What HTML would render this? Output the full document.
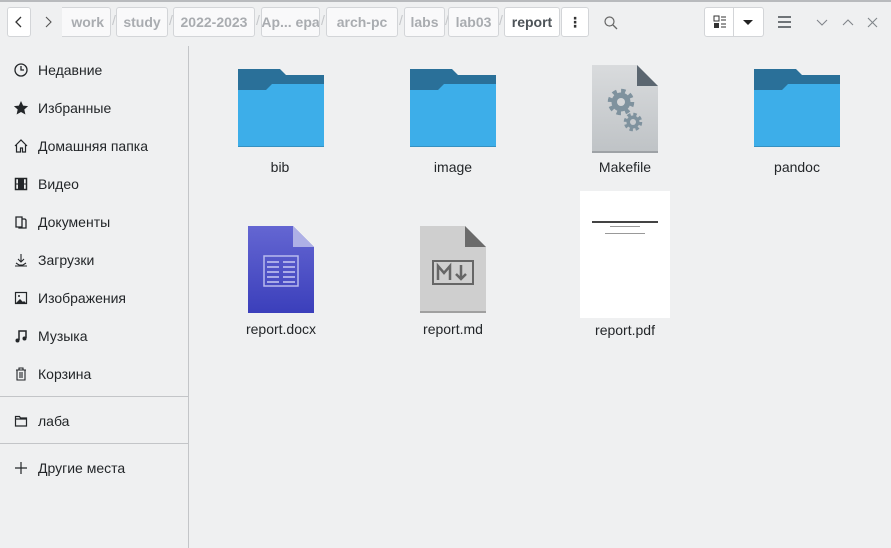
<!DOCTYPE html><html><head><meta charset="utf-8"><style>
body{margin:0;width:891px;height:548px;background:#eff0f1;font-family:"Liberation Sans","DejaVu Sans",sans-serif;position:relative;overflow:hidden;color:#232629}
.a{position:absolute}
.top{left:0;top:0;width:891px;height:2px;background:#b8babd}
.btn{position:absolute;top:7px;height:30px;border:1px solid #d3d5d8;border-radius:3px;background:#f9f9fa;box-sizing:border-box;font-size:14px;color:#a9acb0;font-weight:bold;display:flex;align-items:center;justify-content:center;white-space:nowrap;overflow:hidden}
.sl{position:absolute;top:12px;color:#c5c7ca;font-size:14px}
.side{left:0;top:46px;width:188px;height:502px;border-right:1px solid #c3c5c8}
.it{position:absolute;left:38px;font-size:14px;color:#232629;white-space:nowrap}
.ic{position:absolute;left:13px;width:16px;height:16px}
.sep{position:absolute;left:0;width:188px;height:1px;background:#c3c5c8}
.lbl{position:absolute;font-size:14px;width:120px;text-align:center;color:#232629}
</style></head><body>
<div class="a top"></div>
<div class="btn" style="left:7px;width:24px;background:#fff;color:#333;font-weight:normal"><svg width="12" height="14"><path d="M8 2L3 7L8 12" stroke="#333" fill="none" stroke-width="1.3"/></svg></div>
<svg class="a" style="left:42px;top:16px" width="12" height="14"><path d="M4 1L9 6L4 11" stroke="#555" fill="none" stroke-width="1.1"/></svg>
<div class="btn" style="left:62px;width:49px;border-left:none;border-radius:0 3px 3px 0;justify-content:flex-end;padding-right:6px">work</div>
<span class="sl" style="left:112px">/</span>
<div class="btn" style="left:116px;width:52px">study</div><span class="sl" style="left:169px">/</span>
<div class="btn" style="left:173px;width:82px">2022-2023</div><span class="sl" style="left:256px">/</span>
<div class="btn" style="left:261px;width:59px">Ap... epa</div><span class="sl" style="left:321px">/</span>
<div class="btn" style="left:326px;width:72px">arch-pc</div><span class="sl" style="left:399px">/</span>
<div class="btn" style="left:404px;width:41px">labs</div><span class="sl" style="left:445px">/</span>
<div class="btn" style="left:448px;width:51px">lab03</div><span class="sl" style="left:499px">/</span>
<div class="btn" style="left:504px;width:56px;color:#4d5358;background:#fff">report</div>
<div class="btn" style="left:561px;width:28px;color:#333;background:#fff">⋮</div>
<svg class="a" style="left:603px;top:15px" width="16" height="16"><circle cx="6.5" cy="6.5" r="4.5" stroke="#666" fill="none" stroke-width="1.2"/><path d="M10 10L14 14" stroke="#666" stroke-width="1.3"/></svg>
<div class="btn" style="left:704px;width:60px;background:#fff;justify-content:flex-start"><svg width="58" height="28"><rect x="9" y="8" width="5" height="5" stroke="#333" fill="none"/><rect x="9" y="15" width="5" height="5" fill="#333"/><path d="M16 9h5M16 12h5M16 16h5M16 19h5" stroke="#333"/><path d="M28.5 0v28" stroke="#d3d5d8"/><path d="M38 12h10l-5 5z" fill="#222"/></svg></div>
<svg class="a" style="left:777px;top:15px" width="16" height="14"><path d="M1 2h13M1 7h13M1 12h13" stroke="#6f7478" stroke-width="2"/></svg>
<svg class="a" style="left:816px;top:18px" width="14" height="10"><path d="M1 2L6 7L11 2" stroke="#80858a" fill="none" stroke-width="1.1"/></svg>
<svg class="a" style="left:842px;top:18px" width="14" height="10"><path d="M1 7L6 2L11 7" stroke="#80858a" fill="none" stroke-width="1.1"/></svg>
<svg class="a" style="left:867px;top:17px" width="12" height="12"><path d="M1 1L10 10M10 1L1 10" stroke="#80858a" stroke-width="1.1"/></svg>

<div class="a side">
<svg class="ic" style="top:16px" viewBox="0 0 16 16"><circle cx="8" cy="8" r="6" stroke="#232629" fill="none" stroke-width="1.3"/><path d="M8 4v4h3" stroke="#232629" fill="none" stroke-width="1.3"/></svg><div class="it" style="top:16px">Недавние</div>
<svg class="ic" style="top:54px" viewBox="0 0 16 16"><path d="M8 1l2.1 4.6 5 .5-3.8 3.4 1.1 5L8 12l-4.4 2.5 1.1-5L.9 6.1l5-.5z" fill="#232629"/></svg><div class="it" style="top:54px">Избранные</div>
<svg class="ic" style="top:92px" viewBox="0 0 16 16"><path d="M2 8L8 2L14 8M3.5 7v7h4v-4h2v4h3V7" stroke="#232629" fill="none" stroke-width="1.2"/></svg><div class="it" style="top:92px">Домашняя папка</div>
<svg class="ic" style="top:130px" viewBox="0 0 16 16"><rect x="2.5" y="2.5" width="11" height="11" stroke="#232629" fill="none" stroke-width="1.5"/><rect x="5" y="3" width="6" height="10" fill="#232629"/><path d="M2 8h12" stroke="#232629"/></svg><div class="it" style="top:130px">Видео</div>
<svg class="ic" style="top:168px" viewBox="0 0 16 16"><path d="M3 3h6v10H3zM9 5h3l1 1v8H6v-1" stroke="#232629" fill="none" stroke-width="1.3"/></svg><div class="it" style="top:168px">Документы</div>
<svg class="ic" style="top:206px" viewBox="0 0 16 16"><path d="M8 2v8M5 7l3 3 3-3M3 11l3 2h4l3-2M2 14h12" stroke="#232629" fill="none" stroke-width="1.1"/></svg><div class="it" style="top:206px">Загрузки</div>
<svg class="ic" style="top:244px" viewBox="0 0 16 16"><rect x="2.5" y="2.5" width="11" height="11" stroke="#232629" fill="none" stroke-width="1.2"/><path d="M3 13l4-4 3 3 1-1 2 2z" fill="#232629"/><circle cx="6" cy="6" r="1" fill="#232629"/></svg><div class="it" style="top:244px">Изображения</div>
<svg class="ic" style="top:282px" viewBox="0 0 16 16"><path d="M6 12V3h7v7" stroke="#232629" fill="none" stroke-width="1.5"/><circle cx="4.5" cy="12.5" r="2" fill="#232629"/><circle cx="11.5" cy="10.5" r="2" fill="#232629"/></svg><div class="it" style="top:282px">Музыка</div>
<svg class="ic" style="top:320px" viewBox="0 0 16 16"><path d="M3 4h10M6 4V2h4v2M4 4v10h8V4M7 6v6M9 6v6" stroke="#232629" fill="none" stroke-width="1.1"/></svg><div class="it" style="top:320px">Корзина</div>
<div class="sep" style="top:350px"></div>
<svg class="ic" style="top:367px" viewBox="0 0 16 16"><path d="M2.5 3.5h4l1 1.5h6v8h-11z M2.5 6h11" stroke="#232629" fill="none" stroke-width="1.2"/></svg><div class="it" style="top:367px">лаба</div>
<div class="sep" style="top:397px"></div>
<svg class="ic" style="top:414px" viewBox="0 0 16 16"><path d="M8 2v12M2 8h12" stroke="#232629" stroke-width="1.2"/></svg><div class="it" style="top:414px">Другие места</div>
</div>

<svg class="a" style="left:238px;top:69px" width="86" height="79"><path d="M0 0h42l6 6h38v18H0z" fill="#2a7099"/><path d="M0 21h28l6-6h52v63H0z" fill="#3daee9"/><path d="M0 77h86v1H0z" fill="#3591c2"/></svg>
<div class="lbl" style="left:220px;top:159px">bib</div>
<svg class="a" style="left:410px;top:69px" width="86" height="79"><path d="M0 0h42l6 6h38v18H0z" fill="#2a7099"/><path d="M0 21h28l6-6h52v63H0z" fill="#3daee9"/><path d="M0 77h86v1H0z" fill="#3591c2"/></svg>
<div class="lbl" style="left:393px;top:159px">image</div>
<svg class="a" style="left:592px;top:65px" width="66" height="88"><defs><linearGradient id="g1" x1="0" y1="0" x2="0" y2="1"><stop offset="0" stop-color="#d9dbdd"/><stop offset="1" stop-color="#bfc3c6"/></linearGradient></defs><path d="M0 0h45l21 21v66H0z" fill="url(#g1)"/><path d="M45 0l21 21H45z" fill="#5b6670"/><path d="M0 86h66v2H0z" fill="#9ea2a6"/><circle cx="29" cy="37" r="11" fill="none" stroke="#7f929e" stroke-width="4.5" stroke-dasharray="4.3 4.3"/><circle cx="29" cy="37" r="9.5" fill="#7f929e"/><circle cx="41" cy="57" r="7.5" fill="none" stroke="#7f929e" stroke-width="3.5" stroke-dasharray="3.3 2.6"/><circle cx="41" cy="57" r="6.5" fill="#7f929e"/><circle cx="29" cy="37" r="4" fill="#d4d6d8"/><circle cx="41" cy="57" r="3" fill="#c8cbce"/></svg>
<div class="lbl" style="left:565px;top:159px">Makefile</div>
<svg class="a" style="left:754px;top:69px" width="86" height="79"><path d="M0 0h42l6 6h38v18H0z" fill="#2a7099"/><path d="M0 21h28l6-6h52v63H0z" fill="#3daee9"/><path d="M0 77h86v1H0z" fill="#3591c2"/></svg>
<div class="lbl" style="left:737px;top:159px">pandoc</div>

<svg class="a" style="left:248px;top:226px" width="66" height="88"><defs><linearGradient id="g2" x1="0" y1="0" x2="0" y2="1"><stop offset="0" stop-color="#6466d2"/><stop offset="1" stop-color="#3b3fbb"/></linearGradient></defs><path d="M0 0h45l21 21v66H0z" fill="url(#g2)"/><path d="M45 0l21 21H45z" fill="#aeb0e6"/><rect x="16" y="30" width="34" height="30" fill="none" stroke="#b8baee" stroke-width="1.5"/><path d="M19 36h12M35 36h12M19 41h12M35 41h12M19 46h12M35 46h12M19 51h12M35 51h12M19 56h12M35 56h12" stroke="#c8c9f3" stroke-width="1.5"/></svg>
<div class="lbl" style="left:221px;top:321px">report.docx</div>
<svg class="a" style="left:420px;top:226px" width="66" height="88"><path d="M0 0h45l21 21v66H0z" fill="#cfcfcf"/><path d="M45 0l21 21H45z" fill="#6b6b6b"/><path d="M0 85h66v2H0z" fill="#a0a0a0"/><rect x="13" y="35" width="40" height="23" fill="none" stroke="#666" stroke-width="2"/><path d="M18 54V40l6 7 6-7v14M41 39v14M36 48l5 5 5-5" stroke="#666" stroke-width="2.5" fill="none"/></svg>
<div class="lbl" style="left:393px;top:321px">report.md</div>
<div class="a" style="left:580px;top:191px;width:90px;height:127px;background:#fff"><div style="position:absolute;left:12px;top:30px;width:66px;height:2px;background:#444"></div><div style="position:absolute;left:30px;top:35px;width:30px;height:1px;background:#999"></div><div style="position:absolute;left:25px;top:42px;width:40px;height:1px;background:#999"></div></div>
<div class="lbl" style="left:565px;top:322px">report.pdf</div>
</body></html>
